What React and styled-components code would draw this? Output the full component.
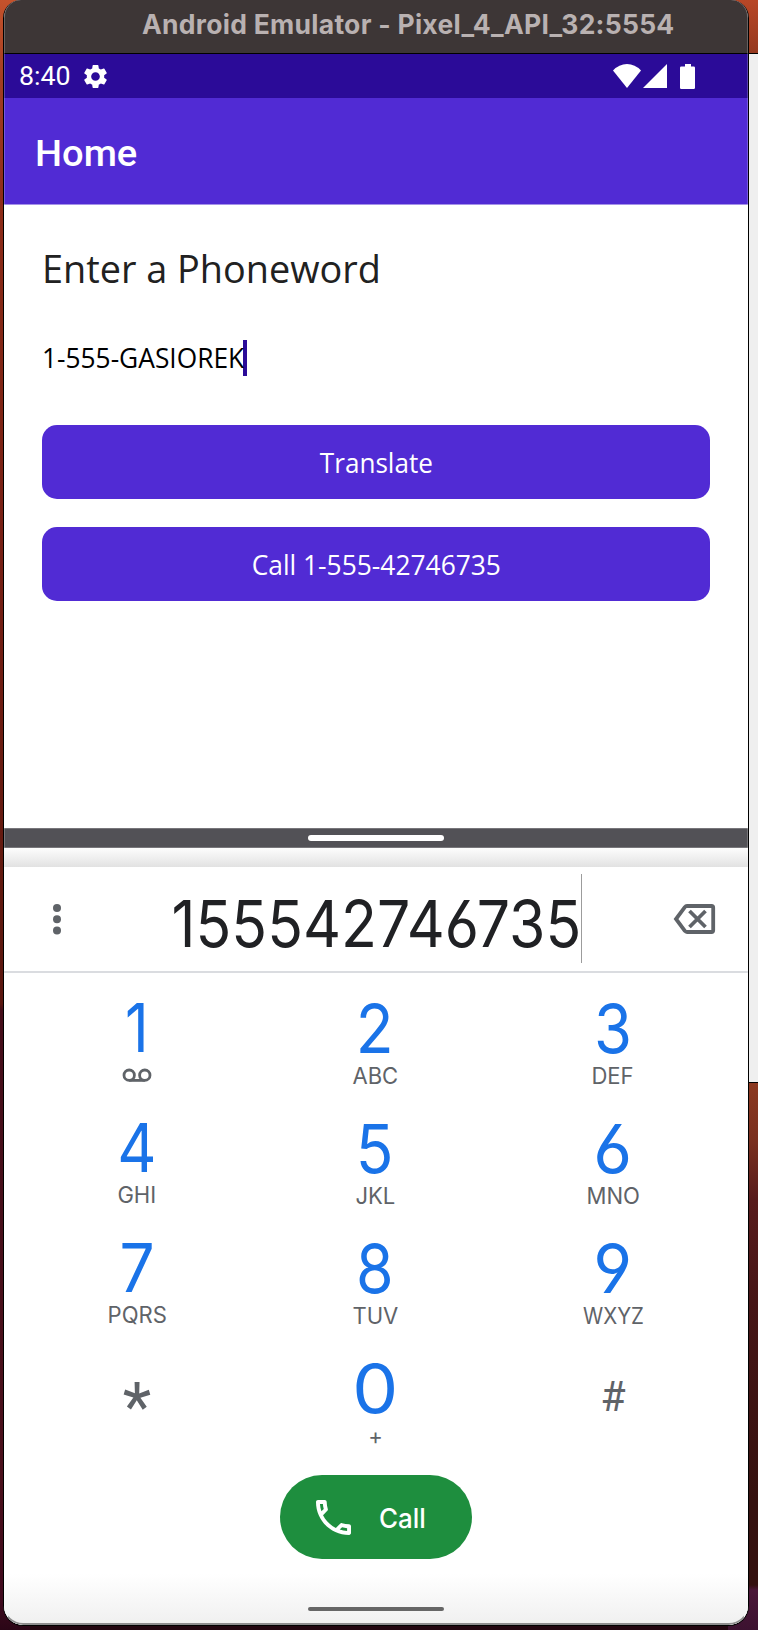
import React from "react";
import styled, { createGlobalStyle } from "styled-components";

const GlobalStyle = createGlobalStyle`
  *, *::before, *::after { box-sizing: border-box; }
  body { margin: 0; overflow: hidden; background: #2b0a14; }
`;

const Desktop = styled.div`
  width: 758px;
  height: 1630px;
  display: flex;
  padding-left: 3px;
  background:
    linear-gradient(180deg, #c5522c 0, #a33e22 80px, #8e2c19 200px, #852816 300px, #761f14 560px, #60190f 900px, #5a160f 1004px, #450e1a 1010px, #4a101b 1480px, #3f0a1e 1600px, #2a0616 1630px) 0 0 / 30px 100% no-repeat,
    linear-gradient(180deg, #b84727 0, #95391f 53px, #8b3820 1084px, #7a301f 1140px, #571b1c 1200px, #461516 1300px, #35110f 1500px, #34110f 1585px, #4b1738 1590px, #3c1230 1630px) 100% 0 / 30px 100% no-repeat,
    #22060f;
`;

const Window = styled.main`
  position: relative;
  width: 746px;
  height: 1626px;
  flex: none;
  display: flex;
  flex-direction: column;
  overflow: hidden;
  background: #fff;
  border: 1px solid #000;
  border-top: 0;
  border-radius: 18px 18px 20px 20px;

  &::after {
    content: "";
    position: absolute;
    inset: 0;
    border: 1px solid rgba(255, 255, 255, 0.22);
    border-top: 0;
    border-bottom: 2px solid #8e8e8e;
    border-radius: 17px 17px 19px 19px;
    pointer-events: none;
  }
`;

const PanelBehind = styled.div`
  width: 9px;
  height: 1030px;
  margin-top: 53px;
  background: #efefef;
  border: solid #000;
  border-width: 1px 0;
`;

const Label = styled.span`
  display: block;
  white-space: pre;
  font-family: ${(p) => p.$font || "Inter"}, sans-serif;
  font-size: ${(p) => p.$size}px;
  font-weight: ${(p) => p.$weight || 400};
  line-height: ${(p) => p.$line}px;
  letter-spacing: ${(p) => p.$track || 0}px;
  color: ${(p) => p.$color};
  font-feature-settings: "cv03", "cv04";
  transform: scaleX(${(p) => p.$stretch || 1});
  transform-origin: ${(p) => p.$origin || "left"} center;
`;

const TitleBar = styled.header`
  height: 54px;
  padding: 8px 0 0 138px;
  background: #3d3636;
  border-bottom: 1px solid #000;
`;

const StatusBar = styled.div`
  height: 44px;
  display: flex;
  align-items: center;
  padding: 0 53px 0 15px;
  background: #2b0b98;
`;

const StatusIcon = styled.svg`
  margin-left: ${(p) => p.$gap}px;
  flex: none;
`;

const Spacer = styled.div`
  flex: 1;
`;

const AppBar = styled.div`
  height: 107px;
  padding: 34px 0 0 31px;
  background: #512bd4;
  border-bottom: 1px solid #a592e8;
`;

const Form = styled.section`
  height: 623px;
  padding: 37px 38px 0;
`;

const Entry = styled.div`
  display: flex;
  align-items: center;
  height: 36px;
  margin: 44px 0 49px;
`;

const Caret = styled.i`
  width: 4px;
  height: 36px;
  margin-left: -3px;
  background: #2b0b98;
`;

const FormButton = styled.button`
  display: flex;
  align-items: center;
  justify-content: center;
  width: 668px;
  height: 74px;
  margin: 0 0 28px;
  padding: 2px 0 0;
  border: 0;
  border-radius: 15px;
  background: #512bd4;
`;

const SplitHandle = styled.div`
  height: 20px;
  display: flex;
  align-items: center;
  justify-content: center;
  background: #525156;
  border: solid #77767a;
  border-width: 1px 0;
`;

const Pill = styled.i`
  width: 136px;
  height: ${(p) => p.$height}px;
  border-radius: 3px;
  background: ${(p) => p.$color};
`;

const Shade = styled.div`
  height: 19px;
  background: linear-gradient(#fdfdfd, #e2e2e2);
`;

const NumberBar = styled.div`
  height: 106px;
  display: flex;
  align-items: flex-start;
  border-bottom: 2px solid #dadce0;
`;

const Dots = styled.svg`
  margin: 26px 0 0 43px;
`;

const NumberField = styled.div`
  width: 413px;
  height: 89px;
  margin: 7px 0 0 102px;
  display: flex;
  justify-content: flex-end;
  border-right: 1px solid #9c9c9c;
`;

const Backspace = styled.svg`
  margin: 36px 0 0 91px;
`;

const Keypad = styled.div`
  display: grid;
  grid-template-columns: repeat(3, 238px);
  grid-auto-rows: 120px;
  padding: 7px 0 0 14px;
`;

const Key = styled.div`
  display: flex;
  flex-direction: column;
  align-items: center;
  gap: 5px;
  padding-top: ${(p) => (p.$symbol ? 27 : 19)}px;

  &:nth-child(3n + 1) {
    padding-top: ${(p) => (p.$symbol ? 27 : 18)}px;
  }
`;

const CallButton = styled.button`
  display: flex;
  align-items: center;
  width: 192px;
  height: 84px;
  margin: 15px 0 0 276px;
  padding: 0 0 0 36px;
  border: 0;
  border-radius: 42px;
  background: #1e8e3e;
`;

const CallText = styled.div`
  margin-left: 28px;
  padding-top: 3px;
`;

const NavBar = styled.footer`
  flex: 1;
  display: flex;
  justify-content: center;
  padding-top: 48px;
  background: linear-gradient(#fff 15px, #f0f0f0 65px);
`;

const keys = [
  { digit: "1", letters: "voicemail", stretch: 0.86 },
  { digit: "2", letters: "ABC", stretch: 0.92 },
  { digit: "3", letters: "DEF", stretch: 0.91 },
  { digit: "4", letters: "GHI", stretch: 0.9 },
  { digit: "5", letters: "JKL", stretch: 0.92 },
  { digit: "6", letters: "MNO", stretch: 0.99 },
  { digit: "7", letters: "PQRS", stretch: 0.92 },
  { digit: "8", letters: "TUV", stretch: 0.9 },
  { digit: "9", letters: "WXYZ", stretch: 0.99, narrow: true },
  { digit: "*" },
  { digit: "0", letters: "+", stretch: 1.08 },
  { digit: "#" },
];

const Voicemail = () => (
  <svg width="30" height="24" viewBox="0 0 30 24" fill="none" stroke="#5f6368" strokeWidth="2.8">
    <circle cx="7.2" cy="12.2" r="5.2" />
    <circle cx="22.8" cy="12.2" r="5.2" />
    <path d="M7.2 17.4h15.600" />
  </svg>
);

function KeyItem({ digit, letters, stretch, narrow }) {
  if (!letters) {
    return (
      <Key $symbol>
        {digit === "*" ? (
          <Label $font="Roboto" $size={66} $line={82} $color="#5f6368" $origin="center">*</Label>
        ) : (
          <Label $font="Roboto" $size={42.5} $line={60} $color="#5f6368" $origin="center" $stretch={0.96}>#</Label>
        )}
      </Key>
    );
  }
  return (
    <Key>
      <Label $size={67.5} $line={60} $color="#1a73e8" $origin="center" $stretch={stretch}>{digit}</Label>
      {letters === "voicemail" ? (
        <Voicemail />
      ) : (
        <Label $size={22.5} $line={24} $color="#5f6368" $origin="center" $stretch={narrow ? 0.91 : 0.98}>{letters}</Label>
      )}
    </Key>
  );
}

export default function App() {
  return (
    <>
      <GlobalStyle />
      <Desktop>
        <Window>
          <TitleBar>
            <Label $size={26.5} $line={32} $weight={700} $track={0.27} $color="#b9b1b1">Android Emulator - Pixel_4_API_32:5554</Label>
          </TitleBar>
          <StatusBar>
            <Label $font="Roboto" $size={26} $line={32} $color="#fff" $stretch={1.03}>8:40</Label>
            <StatusIcon $gap={12} width="29" height="29" viewBox="0 0 24 24" fill="#fff">
              <path d="M19.14 12.94c.04-.3.06-.61.06-.94 0-.32-.02-.64-.07-.94l2.03-1.58a.49.49 0 0 0 .12-.61l-1.92-3.32a.488.488 0 0 0-.59-.22l-2.39.96c-.5-.38-1.03-.7-1.62-.94l-.36-2.54a.484.484 0 0 0-.48-.41h-3.84c-.24 0-.43.17-.47.41l-.36 2.54c-.59.24-1.13.57-1.62.94l-2.39-.96c-.22-.08-.47 0-.59.22L2.74 8.87c-.12.21-.08.47.12.61l2.03 1.58c-.05.3-.09.63-.09.94s.02.64.07.94l-2.03 1.58a.49.49 0 0 0-.12.61l1.92 3.32c.12.22.37.29.59.22l2.39-.96c.5.38 1.03.7 1.62.94l.36 2.54c.05.24.24.41.48.41h3.84c.24 0 .44-.17.47-.41l.36-2.54c.59-.24 1.13-.56 1.62-.94l2.39.96c.22.08.47 0 .59-.22l1.92-3.32c.12-.22.07-.47-.12-.61l-2.01-1.58zM12 15.6c-1.98 0-3.6-1.62-3.6-3.6s1.62-3.6 3.6-3.6 3.6 1.62 3.6 3.6-1.62 3.6-3.6 3.6z" />
            </StatusIcon>
            <Spacer />
            <StatusIcon $gap={0} width="28" height="24" viewBox="0 0 28 24" fill="#fff">
              <path d="M14 24 0 6.5Q6 0 14 0t14 6.5Z" />
            </StatusIcon>
            <StatusIcon $gap={2} width="24" height="24" viewBox="0 0 24 24" fill="#fff">
              <path d="M24 0v24H0Z" />
            </StatusIcon>
            <StatusIcon $gap={13} width="15" height="25" viewBox="0 0 15 25" fill="#fff">
              <path d="M5 0h6v2.5h2.7q1.3 0 1.3 1.3v19.9q0 1.3-1.3 1.3H1.3Q0 25 0 23.7V3.800q0-1.300 1.300-1.300H5Z" />
            </StatusIcon>
          </StatusBar>
          <AppBar>
            <Label $font="Roboto" $size={37} $line={44} $weight={500} $color="#fff" $stretch={1.03}>Home</Label>
          </AppBar>
          <Form>
            <Label $font="'Open Sans'" $size={37.5} $line={54} $color="#212121" $stretch={1.009}>Enter a Phoneword</Label>
            <Entry>
              <Label $font="'Open Sans'" $size={26.5} $line={36} $color="#000" $stretch={0.993}>1-555-GASIOREK</Label>
              <Caret />
            </Entry>
            <FormButton>
              <Label $font="'Open Sans'" $size={26.5} $line={36} $color="#fff" $origin="center" $stretch={0.985}>Translate</Label>
            </FormButton>
            <FormButton>
              <Label $font="'Open Sans'" $size={26.5} $line={36} $color="#fff" $origin="center" $stretch={0.995}>Call 1-555-42746735</Label>
            </FormButton>
          </Form>
          <SplitHandle><Pill $height={6} $color="#fff" /></SplitHandle>
          <Shade />
          <NumberBar>
            <Dots width="20" height="52" viewBox="0 0 20 52" fill="#5f6368">
              <circle cx="10" cy="15" r="4" />
              <circle cx="10" cy="26.300" r="4" />
              <circle cx="10" cy="37.600" r="4" />
            </Dots>
            <NumberField>
              <Label $size={64} $line={99} $color="#202124" $origin="right" $stretch={0.92}>155542746735</Label>
            </NumberField>
            <Backspace width="43" height="32" viewBox="0 0 43 32" fill="none" stroke="#5f6368" strokeWidth="3.8">
              <path d="M14 3h24.500q1.700 0 1.700 1.700v22.600q0 1.700-1.700 1.700H14q-1.300 0-2-1L3 16l9-12q.7-1 2-1Z" />
              <path d="m16.500 8 16 16m0-16-16 16" />
            </Backspace>
          </NumberBar>
          <Keypad>
            {keys.map((key) => (
              <KeyItem key={key.digit} {...key} />
            ))}
          </Keypad>
          <CallButton>
            <svg width="35" height="35" viewBox="3 3 18 18" fill="#fff">
              <path d="M6.540 5c.06.890.210 1.760.450 2.590l-1.200 1.200c-.410-1.200-.670-2.470-.760-3.790h1.510m9.860 12.020c.850.240 1.720.390 2.600.450v1.490c-1.320-.090-2.590-.350-3.800-.750l1.200-1.190M7.500 3H4c-.550 0-1 .450-1 1 0 9.390 7.610 17 17 17 .550 0 1-.450 1-1v-3.490c0-.550-.450-1-1-1-1.240 0-2.450-.200-3.570-.570-.100-.040-.210-.050-.310-.050-.260 0-.510.100-.710.290l-2.200 2.200c-2.830-1.450-5.150-3.760-6.590-6.590l2.200-2.200c.280-.280.360-.670.250-1.020C8.700 6.450 8.500 5.250 8.500 4c0-.550-.450-1-1-1z" />
            </svg>
            <CallText>
              <Label $size={27} $line={36} $weight={500} $color="#fff" $stretch={0.96}>Call</Label>
            </CallText>
          </CallButton>
          <NavBar><Pill $height={4} $color="#666" /></NavBar>
        </Window>
        <PanelBehind />
      </Desktop>
    </>
  );
}
